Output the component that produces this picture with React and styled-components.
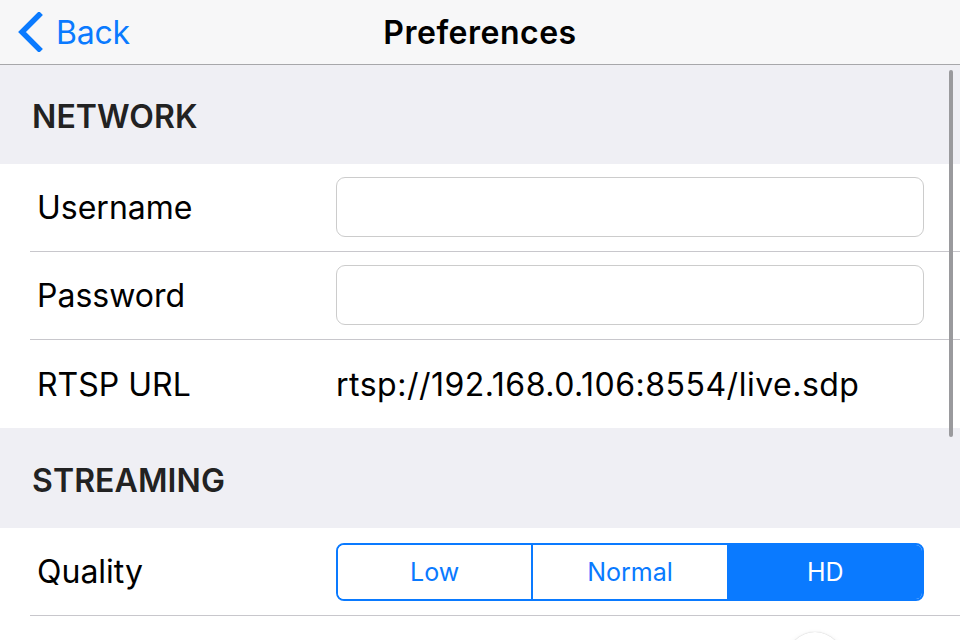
import React, { useState } from "react";
import styled, { createGlobalStyle } from "styled-components";

const blue = "#0a7aff";

const GlobalStyle = createGlobalStyle`
  html, body {
    margin: 0;
    padding: 0;
    background: #ffffff;
  }
  body {
    font-family: Inter, "Liberation Sans", sans-serif;
    -webkit-font-smoothing: antialiased;
  }
`;

const Screen = styled.div`
  position: relative;
  width: 960px;
  height: 640px;
  overflow: hidden;
  background: #ffffff;
`;

const NavBar = styled.div`
  height: 64px;
  display: grid;
  grid-template-columns: 1fr auto 1fr;
  align-items: center;
  background: #f7f7f8;
  border-bottom: 1px solid #a7a7aa;
`;

const BackButton = styled.div`
  display: flex;
  align-items: center;
  gap: 13px;
  padding-left: 17px;
  color: ${blue};
  font-size: 32px;
  letter-spacing: -0.2px;
  cursor: pointer;
`;

const Title = styled.div`
  font-size: 32px;
  font-weight: 600;
  color: #000;
  letter-spacing: 0.5px;
`;

const SectionHeader = styled.div`
  height: ${(p) => p.$height}px;
  display: flex;
  align-items: center;
  padding: 4px 0 0 32px;
  box-sizing: border-box;
  background: #efeff4;
  font-size: 32px;
  font-weight: 600;
  color: #222;
  letter-spacing: 0.1px;
`;

const Group = styled.div`
  background: #fff;
  padding-left: 30px;
`;

const Row = styled.div`
  height: 88px;
  box-sizing: border-box;
  display: flex;
  align-items: center;
  border-bottom: ${(p) => (p.$last ? "none" : "1px solid #c8c7cc")};
`;

const Label = styled.div`
  width: 306px;
  padding-left: 7px;
  box-sizing: border-box;
  font-size: 32px;
  color: #000;
`;

const Field = styled.input`
  width: 588px;
  height: 60px;
  box-sizing: border-box;
  border: 1px solid #cccccc;
  border-radius: 9px;
  background: #fff;
  font-family: inherit;
  font-size: 28px;
  padding: 0 14px;
  outline: none;
  margin-bottom: 2px;
`;

const Value = styled.div`
  font-size: 32px;
  color: #000;
  letter-spacing: 0.5px;
`;

const Segmented = styled.div`
  width: 588px;
  height: 58px;
  box-sizing: border-box;
  display: flex;
  border: 2px solid ${blue};
  border-radius: 8px;
  overflow: hidden;
`;

const Segment = styled.div`
  flex: 1;
  display: flex;
  align-items: center;
  justify-content: center;
  font-size: 25px;
  color: ${(p) => (p.$active ? "#fff" : blue)};
  background: ${(p) => (p.$active ? blue : "#fff")};
  border-left: ${(p) => (p.$first ? "none" : `2px solid ${blue}`)};
  cursor: pointer;
`;

const SliderRow = styled.div`
  height: 88px;
  position: relative;
`;

const Knob = styled.div`
  position: absolute;
  left: 757px;
  top: 16px;
  width: 56px;
  height: 56px;
  border-radius: 50%;
  background: #fff;
  box-shadow: 0 0 1px rgba(0, 0, 0, 0.25), 0 3px 6px rgba(0, 0, 0, 0.15);
`;

const ScrollIndicator = styled.div`
  position: absolute;
  right: 7px;
  top: 70px;
  width: 4px;
  height: 367px;
  border-radius: 2px;
  background: #9a9a9d;
`;

function Chevron() {
  return (
    <svg width="26" height="40" viewBox="0 0 26 40">
      <path
        d="M22 3 L5 20 L22 37"
        fill="none"
        stroke={blue}
        strokeWidth="5.5"
        strokeLinecap="square"
        strokeLinejoin="miter"
      />
    </svg>
  );
}

export default function App() {
  const [quality, setQuality] = useState("HD");
  const options = ["Low", "Normal", "HD"];

  return (
    <Screen>
      <GlobalStyle />
      <NavBar>
        <BackButton>
          <Chevron />
          Back
        </BackButton>
        <Title>Preferences</Title>
        <div />
      </NavBar>

      <SectionHeader $height={99}>NETWORK</SectionHeader>
      <Group>
        <Row>
          <Label>Username</Label>
          <Field type="text" />
        </Row>
        <Row>
          <Label>Password</Label>
          <Field type="password" />
        </Row>
        <Row $last>
          <Label>RTSP URL</Label>
          <Value>rtsp://192.168.0.106:8554/live.sdp</Value>
        </Row>
      </Group>

      <SectionHeader $height={100}>STREAMING</SectionHeader>
      <Group>
        <Row>
          <Label>Quality</Label>
          <Segmented>
            {options.map((o, i) => (
              <Segment
                key={o}
                $first={i === 0}
                $active={quality === o}
                onClick={() => setQuality(o)}
              >
                {o}
              </Segment>
            ))}
          </Segmented>
        </Row>
        <SliderRow>
          <Knob />
        </SliderRow>
      </Group>

      <ScrollIndicator />
    </Screen>
  );
}
